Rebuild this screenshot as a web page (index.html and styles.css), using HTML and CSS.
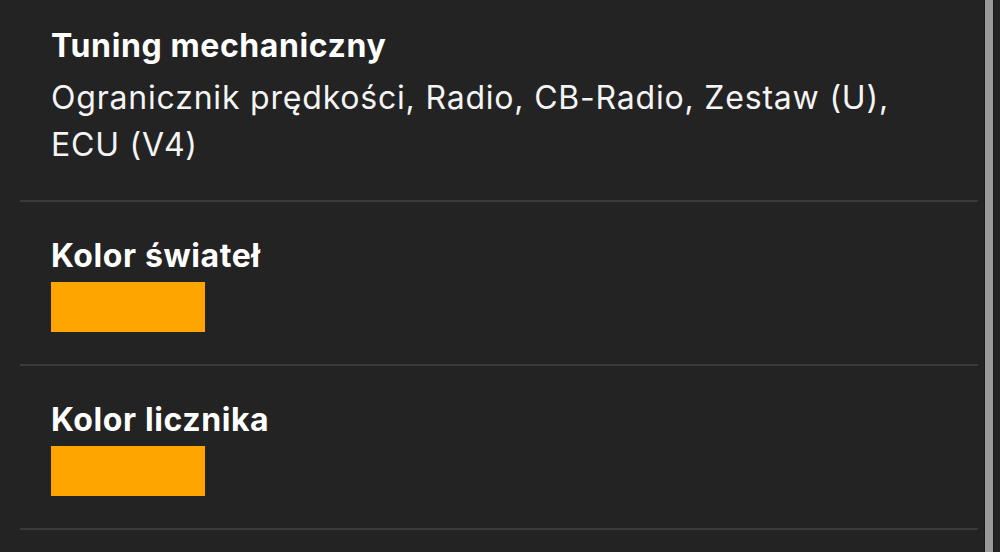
FILE: index.html
```
<!DOCTYPE html>
<html lang="pl">
<head>
  <meta charset="UTF-8">
  <title>Szczegóły pojazdu</title>
  <link rel="stylesheet" href="styles.css">
</head>
<body>

  <div class="details">
    <div class="row">
      <div class="label">Tuning mechaniczny</div>
      <div class="value">Ogranicznik prędkości, Radio, CB-Radio, Zestaw (U), ECU (V4)</div>
    </div>

    <div class="row">
      <div class="label">Kolor świateł</div>
      <div class="swatch"></div>
    </div>

    <div class="row">
      <div class="label">Kolor licznika</div>
      <div class="swatch"></div>
    </div>
  </div>

  <div class="scrollbar"></div>

</body>
</html>
```

FILE: styles.css
```
body {
  margin: 0;
  height: 552px;
  overflow: hidden;
  background: #232323;
  color: #fff;
  font-family: Inter, "Noto Sans", sans-serif;
  display: flex;
}

.details {
  width: 958px;
  margin-left: 20px;
  margin-top: -8px;
}

.row {
  padding: 34px 0 32px 31px;
  border-bottom: 2px solid #3a3a3a;
}

.label {
  font-size: 32px;
  font-weight: 700;
  line-height: 40px;
  letter-spacing: 0.6px;
}

.value {
  font-size: 32px;
  line-height: 47px;
  letter-spacing: 0.8px;
  margin-top: 8px;
  color: #f4f4f4;
  width: 870px;
}

.swatch {
  width: 154px;
  height: 50px;
  margin-top: 6px;
  background: #ffa500;
}

.scrollbar {
  width: 8px;
  margin-left: 6px;
  background: #9a9a9a;
  border-left: 1px solid #1a1a1a;
  border-right: 1px solid #1a1a1a;
}
```
